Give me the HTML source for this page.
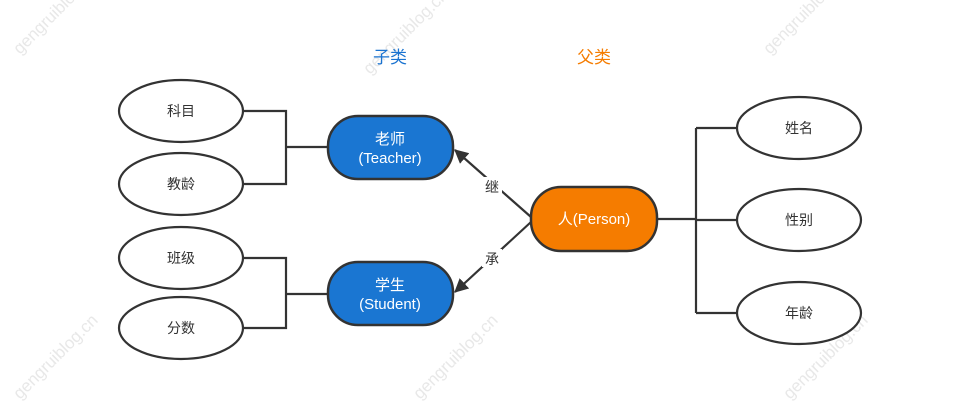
<!DOCTYPE html>
<html><head><meta charset="utf-8"><style>
html,body{margin:0;padding:0;background:#fff;}
svg{display:block;font-family:"Liberation Sans","Noto Sans CJK SC",sans-serif;}
</style></head><body>
<svg width="967" height="404" viewBox="0 0 967 404" xmlns="http://www.w3.org/2000/svg">
<defs>
<marker id="ah2" viewBox="0 0 12 12" refX="11" refY="6" markerWidth="14" markerHeight="14" orient="auto" markerUnits="userSpaceOnUse"><path d="M0,0 L12,6 L0,12 z" fill="#333"/></marker>
</defs>
<g fill="#e8e8e8" font-size="17">
<text transform="translate(20,55) rotate(-45)">gengruiblog.cn</text>
<text transform="translate(370,75) rotate(-45)">gengruiblog.cn</text>
<text transform="translate(770,55) rotate(-45)">gengruiblog.cn</text>
<text transform="translate(20,400) rotate(-45)">gengruiblog.cn</text>
<text transform="translate(420,400) rotate(-45)">gengruiblog.cn</text>
<text transform="translate(790,400) rotate(-45)">gengruiblog.cn</text>
</g>
<text x="390" y="63" font-size="17" fill="#1a73d0" text-anchor="middle">子类</text>
<text x="594" y="63" font-size="17" fill="#f57c00" text-anchor="middle">父类</text>
<g stroke="#333" stroke-width="2.2" fill="none">
<path d="M243,111 H286 V184 H243 M286,147 H328"/>
<path d="M243,258 H286 V328 H243 M286,294 H328"/>
<path d="M657,219 H696 M696,128 V313 M696,128 H737 M696,220 H737 M696,313 H737"/>
<line x1="531" y1="217" x2="455" y2="150" marker-end="url(#ah2)"/>
<line x1="531" y1="222" x2="455" y2="292" marker-end="url(#ah2)"/>
</g>
<rect x="482" y="177" width="20" height="18" fill="#fff"/>
<rect x="482" y="249" width="20" height="18" fill="#fff"/>
<text x="492" y="192" font-size="14" fill="#333" text-anchor="middle">继</text>
<text x="492" y="264" font-size="14" fill="#333" text-anchor="middle">承</text>
<g fill="#fff" stroke="#333" stroke-width="2.2">
<ellipse cx="181" cy="111" rx="62" ry="31"/>
<ellipse cx="181" cy="184" rx="62" ry="31"/>
<ellipse cx="181" cy="258" rx="62" ry="31"/>
<ellipse cx="181" cy="328" rx="62" ry="31"/>
<ellipse cx="799" cy="128" rx="62" ry="31"/>
<ellipse cx="799" cy="220" rx="62" ry="31"/>
<ellipse cx="799" cy="313" rx="62" ry="31"/>
</g>
<g font-size="14" fill="#333" text-anchor="middle">
<text x="181" y="116">科目</text>
<text x="181" y="189">教龄</text>
<text x="181" y="263">班级</text>
<text x="181" y="333">分数</text>
<text x="799" y="133">姓名</text>
<text x="799" y="225">性别</text>
<text x="799" y="318">年龄</text>
</g>
<g stroke="#333" stroke-width="2.5">
<rect x="328" y="116" width="125" height="63" rx="30" fill="#1a76d2"/>
<rect x="328" y="262" width="125" height="63" rx="30" fill="#1a76d2"/>
<rect x="531" y="187" width="126" height="64" rx="30" fill="#f57c00"/>
</g>
<g font-size="15" fill="#fff" text-anchor="middle">
<text x="390" y="144">老师</text>
<text x="390" y="163">(Teacher)</text>
<text x="390" y="290">学生</text>
<text x="390" y="309">(Student)</text>
<text x="594" y="224">人(Person)</text>
</g>
</svg>
</body></html>
